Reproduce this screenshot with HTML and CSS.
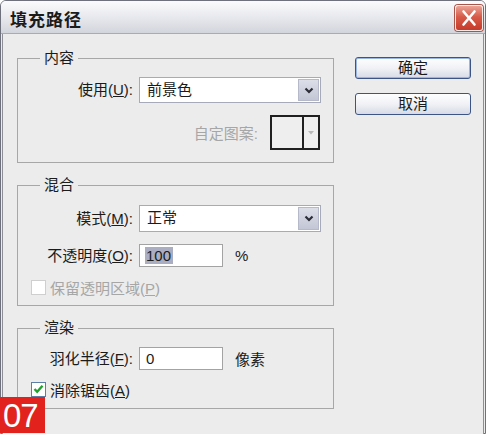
FILE: index.html
```html
<!DOCTYPE html>
<html lang="zh-CN">
<head>
    <meta charset="UTF-8">
    <title>填充路径</title>
    <link rel="stylesheet" href="styles.css">
</head>
<body>

    <div class="window">
        <div class="titlebar">
            <span class="title">填充路径</span>
            <span class="close">
                <svg width="26" height="24" viewBox="0 0 26 24"><path d="M7.5 5.5 L18.5 18.5 M18.5 5.5 L7.5 18.5" stroke="#fff" stroke-width="2.6" stroke-linecap="round"/></svg>
            </span>
        </div>

        <div class="client">
            <div class="groups">
                <fieldset class="group g-content">
                    <legend>内容</legend>
                    <div class="row">
                        <span class="lbl">使用(<u>U</u>):</span>
                        <div class="select"><span class="val">前景色</span><span class="drop"><svg width="10" height="7" viewBox="0 0 10 7"><path d="M1.5 1.5 L5 5 L8.5 1.5" fill="none" stroke="#2c2d36" stroke-width="2.2"/></svg></span></div>
                    </div>
                    <div class="row row-pattern">
                        <span class="off">自定图案:</span>
                        <div class="swatch"><span class="swatch-fill"></span><span class="swatch-arrow"><svg width="6" height="4" viewBox="0 0 6 4"><path d="M0 0 H6 L3 3.5 Z" fill="#b8b8b8"/></svg></span></div>
                    </div>
                </fieldset>

                <fieldset class="group g-blend">
                    <legend>混合</legend>
                    <div class="row">
                        <span class="lbl">模式(<u>M</u>):</span>
                        <div class="select tall"><span class="val">正常</span><span class="drop"><svg width="10" height="7" viewBox="0 0 10 7"><path d="M1.5 1.5 L5 5 L8.5 1.5" fill="none" stroke="#2c2d36" stroke-width="2.2"/></svg></span></div>
                    </div>
                    <div class="row gap-12">
                        <span class="lbl">不透明度(<u>O</u>):</span>
                        <div class="field"><span class="sel">100</span></div>
                        <span class="unit">%</span>
                    </div>
                    <div class="check-row gap-11">
                        <span class="box disabled"></span>
                        <span class="off">保留透明区域(<u>P</u>)</span>
                    </div>
                </fieldset>

                <fieldset class="group g-render">
                    <legend>渲染</legend>
                    <div class="row">
                        <span class="lbl">羽化半径(<u>F</u>):</span>
                        <div class="field"><span class="plain">0</span></div>
                        <span class="unit">像素</span>
                    </div>
                    <div class="check-row gap-10">
                        <span class="box checked"><svg width="11" height="10" viewBox="0 0 11 10"><path d="M1.5 5 L4.2 7.8 L9.5 1.8" fill="none" stroke="#1fa32c" stroke-width="2.4"/></svg></span>
                        <span>消除锯齿(<u>A</u>)</span>
                    </div>
                </fieldset>
            </div>

            <div class="buttons">
                <button class="btn default">确定</button>
                <button class="btn">取消</button>
            </div>
        </div>

        <div class="badge">07</div>
    </div>

</body>
</html>
```

FILE: styles.css
```css
body {
    margin: 0;
    background: #fff;
    font-family: "Liberation Sans", "Noto Sans CJK SC", sans-serif;
    font-size: 15px;
    color: #1b1b1b;
}
.window {
    position: relative;
    width: 484px;
    height: 432px;
    border: 1px solid #6f717c;
    border-radius: 6px 6px 0 0;
    background: #ececec;
}
.titlebar {
    height: 32px;
    display: flex;
    align-items: center;
    justify-content: space-between;
    background: linear-gradient(#fbfbfd, #e6e7ec 55%, #d3d5dd);
    border-bottom: 1px solid #a9abb4;
    border-radius: 5px 5px 0 0;
}
.title {
    font-size: 17px;
    font-weight: bold;
    margin-left: 9px;
    padding-top: 2px;
    letter-spacing: 1px;
}
.close {
    width: 26px;
    height: 24px;
    margin-right: 2px;
    margin-top: 2px;
    border: 1px solid #fbeae6;
    border-radius: 3px;
    background: linear-gradient(#eaa396, #d85a48 45%, #c63b2b);
    box-shadow: 0 0 0 1px #a9544a;
    display: flex;
}
.client {
    display: flex;
    height: 397px;
    margin: 0 1px;
    padding: 15px 0 0 14px;
    border: 1px solid #8d8e96;
    border-top: none;
    background: #ececec;
}
.groups {
    width: 317px;
}
.group {
    box-sizing: border-box;
    width: 317px;
    margin: 0;
    padding: 0;
    border: 1px solid #a7a7a7;
}
.group legend {
    font-size: 15px;
    line-height: 18px;
    padding: 0 4px;
    margin-left: 22px;
}
.g-content { padding: 10px 0 12px; }
.g-blend { padding: 11px 0 9px; margin-top: 13px; }
.g-render { padding: 10px 0 10px; margin-top: 13px; }

.row {
    display: flex;
    align-items: center;
}
.lbl {
    width: 115px;
    margin-right: 6px;
    text-align: right;
    line-height: 18px;
}
.row-pattern {
    justify-content: flex-end;
    padding-right: 13px;
    margin-top: 12px;
}
.gap-12 { margin-top: 12px; }
.gap-11 { margin-top: 11px; }
.gap-10 { margin-top: 10px; }
.off {
    color: #a6a6a6;
}
.select {
    box-sizing: border-box;
    width: 182px;
    height: 26px;
    display: flex;
    border: 1px solid #a6aab9;
    background: #fff;
}
.select.tall { height: 27px; }
.val {
    flex: 1;
    padding-left: 7px;
    line-height: 24px;
}
.drop {
    width: 19px;
    margin: 1px;
    border: 1px solid #b5b9ca;
    background: linear-gradient(#dcdee8, #c3c7d5);
    display: flex;
    align-items: center;
    justify-content: center;
}
.swatch {
    box-sizing: border-box;
    width: 50px;
    height: 35px;
    margin-left: 12px;
    display: flex;
    border: 2px solid #1f1f1f;
    background: #eeeeee;
}
.swatch-fill { flex: 1; }
.swatch-arrow {
    width: 14px;
    border-left: 2px solid #1f1f1f;
    display: flex;
    align-items: center;
    justify-content: center;
}
.field {
    box-sizing: border-box;
    width: 84px;
    height: 23px;
    border: 1px solid #a3a3a3;
    background: #fff;
    display: flex;
    align-items: center;
    padding-left: 5px;
}
.sel {
    background: #abadc2;
    line-height: 17px;
    padding: 0 2px 0 1px;
}
.plain { padding-left: 1px; }
.unit {
    margin-left: 12px;
}
.check-row {
    display: flex;
    align-items: center;
    height: 18px;
    padding-left: 13px;
}
.box {
    box-sizing: border-box;
    width: 15px;
    height: 15px;
    margin-right: 4px;
    background: #fff;
    border: 1px solid #5d7fa7;
    display: flex;
    align-items: center;
    justify-content: center;
}
.box.disabled { border-color: #cfcfcf; }
.buttons {
    margin-left: 21px;
    margin-top: 8px;
    display: flex;
    flex-direction: column;
    gap: 14px;
}
.btn {
    box-sizing: border-box;
    width: 116px;
    height: 22px;
    padding: 0;
    font-family: "Liberation Sans", "Noto Sans CJK SC", sans-serif;
    font-size: 15px;
    line-height: 18px;
    color: #1b1b1b;
    border: 1px solid #3c5586;
    border-radius: 3px;
    background: linear-gradient(#fefefe, #f1f2f6 50%, #d8dbe6);
}
.btn.default {
    box-shadow: inset 0 0 0 1px #9ab7e4;
}
.badge {
    position: absolute;
    left: -1px;
    top: 396px;
    width: 45px;
    height: 36px;
    background: #e2231d;
    color: #fff;
    font-size: 33px;
    line-height: 37px;
    padding-left: 3px;
    box-sizing: border-box;
    letter-spacing: -1px;
}
```
